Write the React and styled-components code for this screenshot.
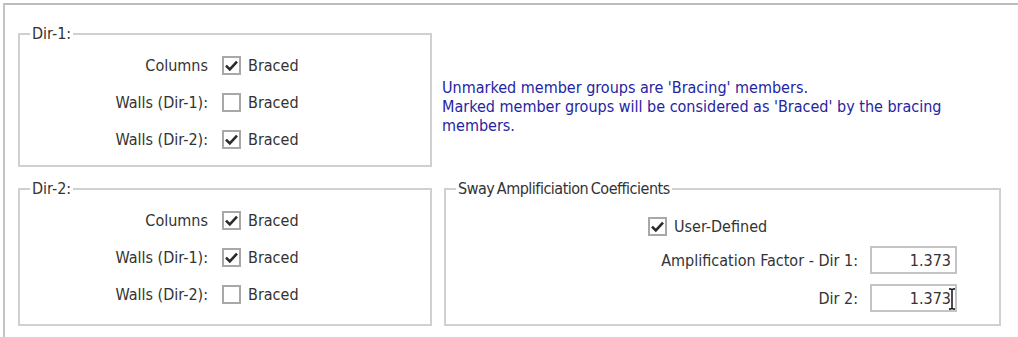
import React from "react";
import styled, { createGlobalStyle } from "styled-components";

const dir1 = [
  { label: "Columns", checked: true },
  { label: "Walls (Dir-1):", checked: false },
  { label: "Walls (Dir-2):", checked: true },
];

const dir2 = [
  { label: "Columns", checked: true },
  { label: "Walls (Dir-1):", checked: true },
  { label: "Walls (Dir-2):", checked: false },
];

function Check({ checked }) {
  return (
    <Box>
      {checked && (
        <svg width="15" height="15" viewBox="0 0 15 15">
          <path
            d="M2 7.6 L5.8 11.4 L13 3.6"
            fill="none"
            stroke="#2b2b2b"
            strokeWidth="2.6"
          />
        </svg>
      )}
    </Box>
  );
}

function Group({ title, rows }) {
  return (
    <GroupBox>
      <Legend>{title}</Legend>
      <Rows>
        {rows.map((row) => (
          <React.Fragment key={row.label}>
            <RowLabel>{row.label}</RowLabel>
            <CheckLine>
              <Check checked={row.checked} />
              <span>Braced</span>
            </CheckLine>
          </React.Fragment>
        ))}
      </Rows>
    </GroupBox>
  );
}

export default function App() {
  return (
    <>
      <GlobalStyle />
      <Frame>
        <Group title="Dir-1:" rows={dir1} />
        <Note>
          Unmarked member groups are 'Bracing' members.
          <br />
          Marked member groups will be considered as 'Braced' by the bracing
          <br />
          members.
        </Note>
        <Group title="Dir-2:" rows={dir2} />
        <GroupBox>
          <SwayLegend>Sway Amplificiation Coefficients</SwayLegend>
          <SwayBody>
            <UserRow>
              <Check checked />
              <span>User-Defined</span>
            </UserRow>
            <FieldRow>
              <span>Amplification Factor - Dir 1:</span>
              <FieldWrap>
                <Field readOnly value="1.373" />
              </FieldWrap>
            </FieldRow>
            <FieldRow>
              <span>Dir 2:</span>
              <FieldWrap>
                <Field readOnly value="1.373" />
                <Cursor width="8" height="22" viewBox="0 0 8 22">
                  <path
                    d="M1 1h2.5M4.5 1h2.5M4 1v20M1 21h2.5M4.5 21h2.5"
                    stroke="#000"
                    strokeWidth="1.4"
                    fill="none"
                  />
                </Cursor>
              </FieldWrap>
            </FieldRow>
          </SwayBody>
        </GroupBox>
      </Frame>
    </>
  );
}

const GlobalStyle = createGlobalStyle`
  body {
    margin: 0;
    background: #fff;
    font-family: "DejaVu Sans Condensed", "DejaVu Sans", sans-serif;
    font-size: 16px;
    color: #333;
  }
`;

const Frame = styled.div`
  margin: 3px 0 0 3px;
  height: 334px;
  box-sizing: border-box;
  border-top: 2px solid #bdbdbd;
  border-left: 2px solid #c4c4c4;
  padding: 19px 0 0 13px;
  display: grid;
  grid-template-columns: 414px 557px;
  grid-template-rows: 143px 147px;
  column-gap: 12px;
  row-gap: 12px;
`;

const GroupBox = styled.fieldset`
  margin: 0;
  padding: 0;
  min-width: 0;
  box-sizing: border-box;
  border: 2px solid #d0d0d0;
`;

const Legend = styled.legend`
  margin-left: 10px;
  padding: 0 2px;
  line-height: 20px;
`;

const SwayLegend = styled(Legend)`
  word-spacing: -1.5px;
  letter-spacing: -0.5px;
`;

const Rows = styled.div`
  display: grid;
  grid-template-columns: 188px auto;
  grid-auto-rows: 37px;
  column-gap: 14px;
  align-items: center;
  padding-top: 3px;
`;

const RowLabel = styled.span`
  justify-self: end;
`;

const CheckLine = styled.label`
  display: flex;
  align-items: center;
  gap: 7px;
`;

const Box = styled.span`
  width: 19px;
  height: 19px;
  box-sizing: border-box;
  border: 2px solid #a8a8a8;
  background: #fff;
  display: flex;
  align-items: center;
  justify-content: center;
`;

const Note = styled.p`
  margin: 0 0 0 -2px;
  padding-top: 54px;
  line-height: 19px;
  color: #2424a4;
`;

const SwayBody = styled.div`
  display: flex;
  flex-direction: column;
  align-items: flex-end;
  gap: 10px;
  padding: 17px 42px 0 0;
`;

const UserRow = styled.label`
  align-self: flex-start;
  margin-left: 202px;
  height: 20px;
  display: flex;
  align-items: center;
  gap: 7px;
`;

const FieldRow = styled.div`
  display: flex;
  align-items: center;
  gap: 12px;
`;

const FieldWrap = styled.div`
  position: relative;
`;

const Field = styled.input`
  display: block;
  width: 87px;
  height: 28px;
  box-sizing: border-box;
  border: 2px solid #c4c4c4;
  padding: 0 4px;
  text-align: right;
  font: inherit;
  color: #333;
  outline: none;
`;

const Cursor = styled.svg`
  position: absolute;
  left: 78px;
  top: 4px;
`;
